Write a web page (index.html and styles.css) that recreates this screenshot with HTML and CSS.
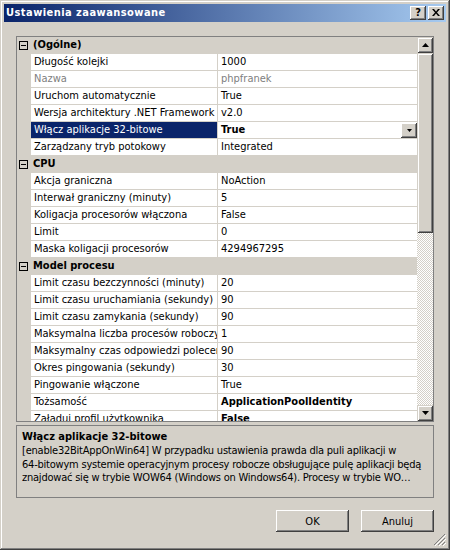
FILE: index.html
```html
<!DOCTYPE html>
<html lang="pl">
<head>
<meta charset="utf-8">
<title>Ustawienia zaawansowane</title>
<link rel="stylesheet" href="styles.css">
</head>
<body>
<div class="window">
  <div class="titlebar">
    <span class="title">Ustawienia zaawansowane</span>
    <div class="tbtns">
      <div class="tbtn help">?</div>
      <div class="tbtn close"><svg width="8" height="7" viewBox="0 0 8 7"><path d="M0 0h2l2 2.5L6 0h2L5 3.5 8 7H6L4 4.5 2 7H0l3-3.5z" fill="#000"/></svg></div>
    </div>
  </div>
  <div class="client">
    <div class="grid">
      <div class="rows">
        <div class="cat"><div class="gut"><svg class="box" width="9" height="9" viewBox="0 0 9 9"><rect x="0.5" y="0.5" width="8" height="8" fill="none" stroke="#000"/><path d="M2 4.5h5" stroke="#000"/></svg></div><div class="catlabel">(Ogólne)</div></div>
        <div class="row"><div class="gut"></div><div class="name">Długość kolejki</div><div class="val">1000</div></div>
        <div class="row dis"><div class="gut"></div><div class="name">Nazwa</div><div class="val">phpfranek</div></div>
        <div class="row"><div class="gut"></div><div class="name">Uruchom automatycznie</div><div class="val">True</div></div>
        <div class="row"><div class="gut"></div><div class="name">Wersja architektury .NET Framework</div><div class="val">v2.0</div></div>
        <div class="row sel"><div class="gut"></div><div class="name">Włącz aplikacje 32-bitowe</div><div class="val b">True<div class="dd"><svg width="5" height="3" viewBox="0 0 5 3"><path d="M0 0h5L2.5 3z" fill="#000"/></svg></div></div></div>
        <div class="row"><div class="gut"></div><div class="name">Zarządzany tryb potokowy</div><div class="val">Integrated</div></div>
        <div class="cat"><div class="gut"><svg class="box" width="9" height="9" viewBox="0 0 9 9"><rect x="0.5" y="0.5" width="8" height="8" fill="none" stroke="#000"/><path d="M2 4.5h5" stroke="#000"/></svg></div><div class="catlabel">CPU</div></div>
        <div class="row"><div class="gut"></div><div class="name">Akcja graniczna</div><div class="val">NoAction</div></div>
        <div class="row"><div class="gut"></div><div class="name">Interwał graniczny (minuty)</div><div class="val">5</div></div>
        <div class="row"><div class="gut"></div><div class="name">Koligacja procesorów włączona</div><div class="val">False</div></div>
        <div class="row"><div class="gut"></div><div class="name">Limit</div><div class="val">0</div></div>
        <div class="row"><div class="gut"></div><div class="name">Maska koligacji procesorów</div><div class="val">4294967295</div></div>
        <div class="cat"><div class="gut"><svg class="box" width="9" height="9" viewBox="0 0 9 9"><rect x="0.5" y="0.5" width="8" height="8" fill="none" stroke="#000"/><path d="M2 4.5h5" stroke="#000"/></svg></div><div class="catlabel">Model procesu</div></div>
        <div class="row"><div class="gut"></div><div class="name">Limit czasu bezczynności (minuty)</div><div class="val">20</div></div>
        <div class="row"><div class="gut"></div><div class="name">Limit czasu uruchamiania (sekundy)</div><div class="val">90</div></div>
        <div class="row"><div class="gut"></div><div class="name">Limit czasu zamykania (sekundy)</div><div class="val">90</div></div>
        <div class="row"><div class="gut"></div><div class="name">Maksymalna liczba procesów roboczych</div><div class="val">1</div></div>
        <div class="row"><div class="gut"></div><div class="name">Maksymalny czas odpowiedzi polecenia ping (sekundy)</div><div class="val">90</div></div>
        <div class="row"><div class="gut"></div><div class="name">Okres pingowania (sekundy)</div><div class="val">30</div></div>
        <div class="row"><div class="gut"></div><div class="name">Pingowanie włączone</div><div class="val">True</div></div>
        <div class="row"><div class="gut"></div><div class="name">Tożsamość</div><div class="val b">ApplicationPoolIdentity</div></div>
        <div class="row"><div class="gut"></div><div class="name">Załaduj profil użytkownika</div><div class="val b">False</div></div>
      </div>
      <div class="vscroll">
        <div class="sbtn"><svg width="7" height="4" viewBox="0 0 7 4"><path d="M3.5 0L7 4H0z" fill="#000"/></svg></div>
        <div class="thumb"></div>
        <div class="track"></div>
        <div class="sbtn"><svg width="7" height="4" viewBox="0 0 7 4"><path d="M0 0h7L3.5 4z" fill="#000"/></svg></div>
      </div>
    </div>
    <div class="desc">
      <div class="desctitle">Włącz aplikacje 32-bitowe</div>
      <div class="descline">[enable32BitAppOnWin64] W przypadku ustawienia prawda dla puli aplikacji w</div>
      <div class="descline">64-bitowym systemie operacyjnym procesy robocze obsługujące pulę aplikacji będą</div>
      <div class="descline">znajdować się w trybie WOW64 (Windows on Windows64). Procesy w trybie WO…</div>
    </div>
    <div class="buttons">
      <div class="btn">OK</div>
      <div class="btn">Anuluj</div>
    </div>
  </div>
  <svg class="grip" width="12" height="12" viewBox="0 0 12 12">
    <path d="M11 0L0 11M11 4L4 11M11 8L8 11" stroke="#808080" stroke-width="1"/>
    <path d="M12 1L1 12M12 5L5 12M12 9L9 12" stroke="#fff" stroke-width="1"/>
  </svg>
</div>
</body>
</html>
```
FILE: styles.css
```css
* { box-sizing: border-box; }
html, body {
  margin: 0;
  padding: 0;
  background: #d4d0c8;
}
body {
  font-family: "DejaVu Sans Condensed", "DejaVu Sans", "Liberation Sans", sans-serif;
  font-stretch: condensed;
  font-size: 11px;
  color: #000;
}
.window {
  position: relative;
  width: 450px;
  height: 550px;
  padding: 4px;
  background: #d4d0c8;
  box-shadow: inset -1px -1px #404040, inset 1px 1px #d4d0c8, inset -2px -2px #808080, inset 2px 2px #fff;
  display: flex;
  flex-direction: column;
}
.titlebar {
  height: 18px;
  background: linear-gradient(to right, #0a246a, #a6caf0);
  display: flex;
  align-items: center;
  justify-content: space-between;
  padding: 0 2px 0 2px;
}
.title {
  color: #fff;
  font-weight: bold;
  letter-spacing: 0.45px;
  line-height: 18px;
  white-space: nowrap;
}
.tbtns {
  display: flex;
  gap: 2px;
}
.tbtn {
  width: 16px;
  height: 14px;
  background: #d4d0c8;
  box-shadow: inset -1px -1px #404040, inset 1px 1px #fff, inset -2px -2px #808080;
  display: flex;
  align-items: center;
  justify-content: center;
  font-weight: bold;
  font-size: 11px;
  line-height: 14px;
  padding-bottom: 1px;
}
.client {
  flex: 1;
  display: flex;
  flex-direction: column;
  padding: 14px 12px 0 12px;
}
.grid {
  height: 386px;
  border: 1px solid #808080;
  display: flex;
  background: #d4d0c8;
}
.rows {
  width: 400px;
  height: 384px;
  overflow: hidden;
}
.row, .cat {
  display: flex;
  height: 17px;
}
.gut {
  width: 14px;
  flex: none;
  position: relative;
}
.box {
  position: absolute;
  left: 2px;
  top: 4px;
}
.catlabel {
  font-weight: bold;
  padding-left: 2px;
  line-height: 16px;
  white-space: nowrap;
}
.name {
  width: 187px;
  flex: none;
  background: #fff;
  border-right: 1px solid #d4d0c8;
  border-bottom: 1px solid #d4d0c8;
  padding-left: 3px;
  line-height: 16px;
  white-space: nowrap;
  overflow: hidden;
}
.val {
  flex: 1;
  position: relative;
  background: #fff;
  border-bottom: 1px solid #d4d0c8;
  padding-left: 3px;
  line-height: 16px;
  white-space: nowrap;
  overflow: hidden;
}
.b { font-weight: bold; }
.dis .name, .dis .val { color: #808080; }
.sel .name {
  background: #0a246a;
  color: #fff;
}
.dd {
  position: absolute;
  right: 0;
  top: 1px;
  width: 16px;
  height: 15px;
  background: #d4d0c8;
  box-shadow: inset -1px -1px #404040, inset 1px 1px #fff, inset -2px -2px #808080;
  display: flex;
  align-items: center;
  justify-content: center;
}
.vscroll {
  width: 16px;
  height: 384px;
  display: flex;
  flex-direction: column;
}
.sbtn {
  width: 16px;
  height: 16px;
  flex: none;
  background: #d4d0c8;
  box-shadow: inset 1px 1px #d4d0c8, inset -1px -1px #404040, inset 2px 2px #fff, inset -2px -2px #808080;
  display: flex;
  align-items: center;
  justify-content: center;
}
.thumb {
  height: 180px;
  flex: none;
  background: #d4d0c8;
  box-shadow: inset 1px 1px #d4d0c8, inset -1px -1px #404040, inset 2px 2px #fff, inset -2px -2px #808080;
}
.track {
  flex: 1;
  background: repeating-conic-gradient(#fff 0 25%, #d4d0c8 0 50%) 0 0 / 2px 2px;
}
.desc {
  margin-top: 3px;
  height: 73px;
  border: 1px solid #808080;
  padding: 3px 5px 0 5px;
}
.desctitle {
  font-weight: bold;
  line-height: 15px;
  white-space: nowrap;
}
.descline {
  line-height: 13.5px;
  letter-spacing: -0.22px;
  white-space: nowrap;
  overflow: hidden;
}
.buttons {
  margin-top: 12px;
  display: flex;
  justify-content: flex-end;
  gap: 12px;
}
.btn {
  width: 73px;
  height: 22px;
  background: #d4d0c8;
  box-shadow: inset -1px -1px #404040, inset 1px 1px #fff, inset -2px -2px #808080, inset 2px 2px #d4d0c8;
  display: flex;
  align-items: center;
  justify-content: center;
}
.grip {
  position: absolute;
  right: 4px;
  bottom: 4px;
}
```
